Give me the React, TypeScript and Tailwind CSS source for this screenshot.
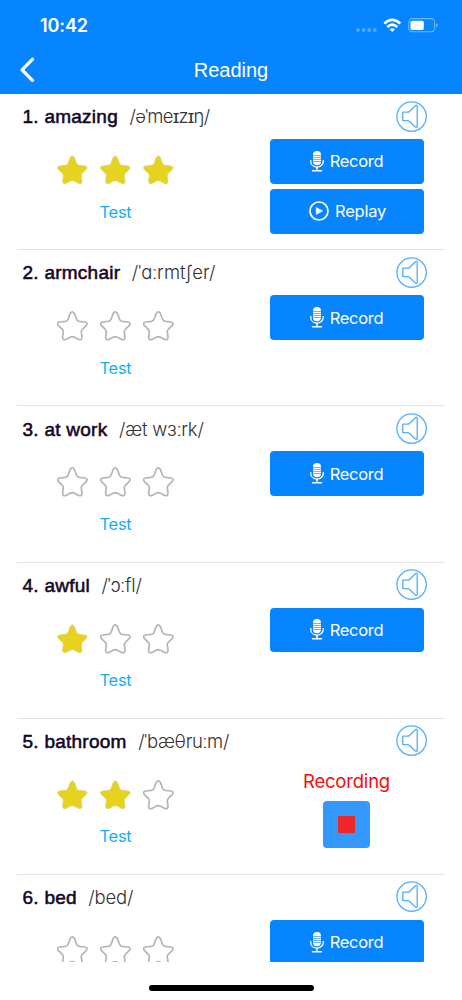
type Word = {
  id: number;
  word: string;
  phonetic: string;
  stars: number;
  state: "idle" | "recorded" | "recording";
  tracking: string;
};

const words: Word[] = [
  { id: 1, word: "amazing", phonetic: "/əˈmeɪzɪŋ/", stars: 3, state: "recorded", tracking: "tracking-[-0.75px]" },
  { id: 2, word: "armchair", phonetic: "/ˈɑːrmtʃer/", stars: 0, state: "idle", tracking: "tracking-[0px]" },
  { id: 3, word: "at work", phonetic: "/æt wɜːrk/", stars: 0, state: "idle", tracking: "tracking-[-0.2px]" },
  { id: 4, word: "awful", phonetic: "/ˈɔːfl/", stars: 1, state: "idle", tracking: "tracking-[-0.1px]" },
  { id: 5, word: "bathroom", phonetic: "/ˈbæθruːm/", stars: 2, state: "recording", tracking: "tracking-[-0.3px]" },
  { id: 6, word: "bed", phonetic: "/bed/", stars: 0, state: "idle", tracking: "tracking-[-0.2px]" },
];

function StarIcon({ filled }: { filled: boolean }) {
  return (
    <svg
      width="31"
      height="30"
      viewBox="0 0 31 30"
      className={filled ? "fill-[#e5d31f] stroke-[#dcd27a]" : "fill-none stroke-[#b5b5b5]"}
      strokeWidth={filled ? 0.8 : 1.7}
    >
      <path d="M13.2 2.5Q15.3-.7 17.4 2.5L19.5 8.2Q20.2 10 22.2 10.3L27.9 11Q31.5 11.7 29.1 14.6L25.3 18.3Q24.1 19.5 24.3 21.2L25 26Q25 29.7 21.6 28.4L17.1 26.1Q15.3 25.3 13.5 26.1L9 28.4Q5.6 29.7 5.6 26L6.3 21.2Q6.5 19.5 5.3 18.3L1.5 14.6Q-.9 11.7 2.7 11L8.4 10.3Q10.4 10 11.1 8.2Z" />
    </svg>
  );
}

function SpeakerIcon() {
  return (
    <svg width="32" height="32" viewBox="0 0 32 32" fill="none" stroke="#55aefc" strokeWidth="1.3" strokeLinejoin="round">
      <circle cx="15.6" cy="15.6" r="14.7" />
      <path d="M6.8 11.2H11.4Q12.8 11.2 13.8 10.2L18.8 5.2Q21.2 3.1 21.2 5.4V25.2Q21.2 27.6 18.8 25.5L13.8 20.7Q12.8 19.7 11.4 19.7H6.8Z" />
    </svg>
  );
}

function MicIcon() {
  return (
    <svg width="14" height="21" viewBox="0 0 14 21" fill="none" stroke="white">
      <rect x="3" y="0" width="8" height="14.2" rx="4" fill="white" stroke="none" />
      <path d="M3 4.5H11M3 6.5H11M3 8.5H11M3 10.5H11" stroke="#0a84ff" strokeWidth="0.6" />
      <path d="M.7 9V10.2C.7 18 13.3 18 13.3 10.2V9" strokeWidth="1.3" />
      <path d="M7 16V19.5" strokeWidth="1.5" />
      <path d="M2.5 19.8H11.5" strokeWidth="1.5" strokeLinecap="round" />
    </svg>
  );
}

function PlayIcon() {
  return (
    <svg width="20" height="20" viewBox="0 0 20 20" fill="none">
      <circle cx="10" cy="10" r="9" stroke="white" strokeWidth="1.7" />
      <path d="M7.3 6.6V13.4L13.6 10Z" fill="white" stroke="white" strokeWidth="0.6" strokeLinejoin="round" />
    </svg>
  );
}

function StatusBar() {
  return (
    <div className="flex h-[46px] items-start justify-between pl-10 pr-6 text-white">
      <span className="mt-[13px] text-[18px] leading-[26px] font-semibold tracking-[-0.1px]">10:42</span>
      <svg width="83" height="16" viewBox="355 17 83 16" fill="none" className="mt-[17px]">
        <g fill="#52a9ff">
          <circle cx="358" cy="30" r="1.9" />
          <circle cx="363.6" cy="30" r="1.9" />
          <circle cx="369.2" cy="30" r="1.9" />
          <circle cx="374.8" cy="30" r="1.9" />
        </g>
        <g stroke="white" strokeWidth="2.6">
          <path d="M384.3 23.6Q392.3 16.1 400.3 23.6" />
          <path d="M387.3 27Q392.3 22.4 397.3 27" />
        </g>
        <path d="M389.6 29.3Q392.3 27.1 395 29.3L392.3 32Z" fill="white" />
        <rect x="408.8" y="18.6" width="25.8" height="13.2" rx="3.6" stroke="#6cb6ff" strokeWidth="1.1" />
        <rect x="410.5" y="20.7" width="13.3" height="9.2" rx="1.6" fill="white" />
        <path d="M436 23.3Q437.6 24 437.6 25.3Q437.6 26.6 436 27.3Z" fill="#6cb6ff" />
      </svg>
    </div>
  );
}

function Header() {
  return (
    <header className="h-[94px] shrink-0 bg-[#0785ff]">
      <StatusBar />
      <div className="grid h-12 grid-cols-[60px_1fr_60px] items-center">
        <button className="pl-[19px]" aria-label="Back">
          <svg width="16" height="26" viewBox="0 0 16 26" fill="none" stroke="white" strokeWidth="3.3" strokeLinecap="round" strokeLinejoin="round">
            <path d="M13.4 2.3L3.1 12.8L13.4 23.3" />
          </svg>
        </button>
        <h1 className="text-center font-['Liberation_Sans',sans-serif] text-[20px] text-white">Reading</h1>
      </div>
    </header>
  );
}

function RecordButton() {
  return (
    <button className="flex h-[44.5px] w-[154px] items-center justify-center gap-[6px] rounded bg-[#0785ff] text-[16.5px] tracking-[-0.3px] text-white">
      <MicIcon />
      <span className="pt-px">Record</span>
    </button>
  );
}

function ReplayButton() {
  return (
    <button className="flex h-[44.5px] w-[154px] items-center justify-center gap-[6px] rounded bg-[#0785ff] pl-[2px] text-[16.5px] tracking-[-0.25px] text-white">
      <PlayIcon />
      <span className="pt-px">Replay</span>
    </button>
  );
}

function WordRow({ item }: { item: Word }) {
  return (
    <li className="mx-[17px] h-[156.2px] shrink-0 border-b border-[#e4e4e4] pt-[6px] pr-[17px] pl-[5.5px]">
      <div className="flex h-[33px] items-center justify-between">
        <p className="flex items-baseline gap-[11.5px] pt-[2px] text-[19px] whitespace-nowrap">
          <span className="font-['Liberation_Sans',sans-serif] tracking-[0.25px] text-[#120826] [-webkit-text-stroke:0.55px_#120826]">
            {item.id}. {item.word}
          </span>
          <span className={`text-[18.5px] font-light text-[#333] ${item.tracking}`}>{item.phonetic}</span>
        </p>
        <button aria-label="Listen">
          <SpeakerIcon />
        </button>
      </div>
      <div className="flex justify-between pr-[4.5px] pt-[6px]">
        <div className="flex w-[186px] flex-col items-center pt-[16px]">
          <div className="flex gap-[11.7px]">
            {[1, 2, 3].map((n) => (
              <StarIcon key={n} filled={n <= item.stars} />
            ))}
          </div>
          <button className="mt-[14.5px] text-[16.5px] leading-[25px] tracking-[-0.3px] text-[#15aef5]">Test</button>
        </div>
        {item.state === "recording" ? (
          <div className="flex w-[154px] flex-col items-center pt-[5px]">
            <span className="text-[18.5px] leading-[24px] tracking-[-0.2px] text-[#fa0a0a]">Recording</span>
            <button aria-label="Stop" className="mt-[8px] flex h-[47px] w-[47px] items-center justify-center rounded bg-[#3499fb]">
              <span className="h-[17px] w-[17px] rounded-[1px] bg-[#ee2629]" />
            </button>
          </div>
        ) : (
          <div className="flex flex-col gap-[5.5px]">
            <RecordButton />
            {item.state === "recorded" && <ReplayButton />}
          </div>
        )}
      </div>
    </li>
  );
}

export default function App() {
  return (
    <div className="flex h-[1000px] w-[462px] flex-col bg-white font-['Inter',sans-serif]">
      <Header />
      <ul className="flex h-[868px] shrink-0 flex-col overflow-hidden">
        {words.map((item) => (
          <WordRow key={item.id} item={item} />
        ))}
      </ul>
      <div className="mx-auto mt-[23px] h-[6px] w-[165px] rounded-full bg-black" />
    </div>
  );
}
